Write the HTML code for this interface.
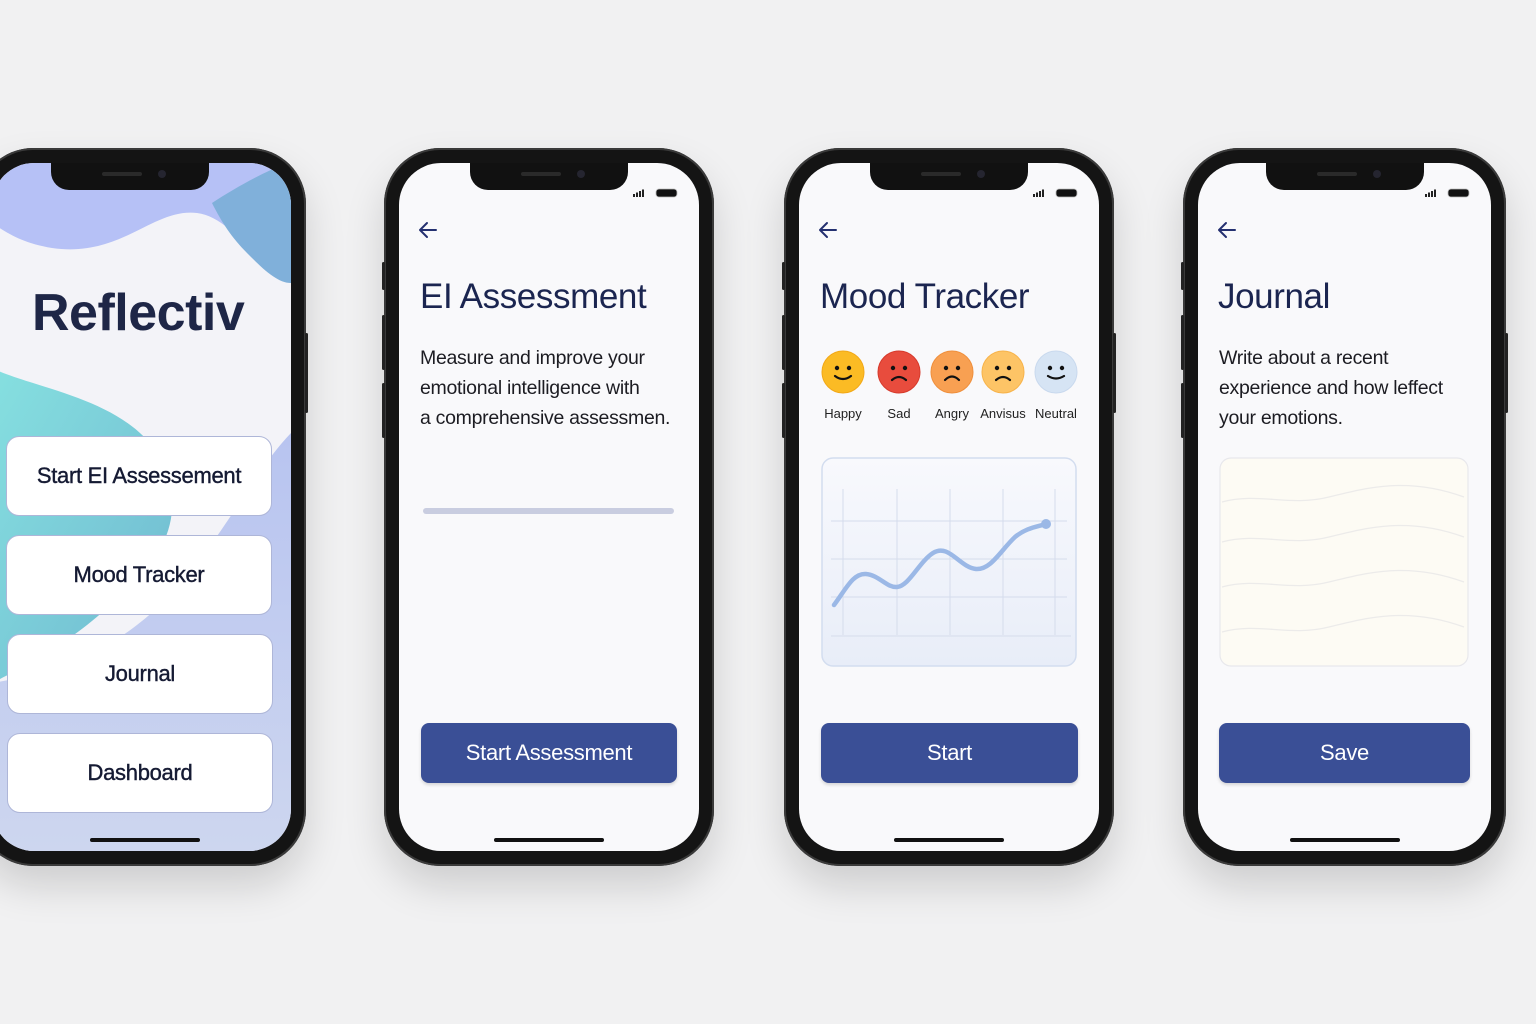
<!DOCTYPE html>
<html><head><meta charset="utf-8"><style>
*{margin:0;padding:0;box-sizing:border-box}
body{width:1536px;height:1024px;background:#f1f1f2;position:relative;overflow:hidden;font-family:"Liberation Sans",sans-serif}
.frame{position:absolute;top:148px;height:718px;background:#141414;border-radius:56px;box-shadow:0 20px 40px rgba(0,0,0,.15),inset 0 0 0 2px #3a3a3a}
.screen{position:absolute;left:15px;right:15px;top:15px;bottom:15px;border-radius:42px;background:#f9f9fb;overflow:hidden}
.notch{position:absolute;top:0;left:50%;margin-left:-79px;width:158px;height:27px;background:#111;border-radius:0 0 18px 18px}
.notch:after{content:"";position:absolute;left:51px;top:9px;width:40px;height:4px;border-radius:2px;background:#2a2a2a}
.notch:before{content:"";position:absolute;left:107px;top:7px;width:8px;height:8px;border-radius:50%;background:#252530}
.home{position:absolute;bottom:9px;left:50%;margin-left:-55px;width:110px;height:4px;border-radius:2px;background:#111}
.status{position:absolute;top:25px;right:20px;width:46px;height:10px}
.abs{position:absolute}
.title{position:absolute;left:21px;top:114px;font-size:35px;color:#1b2550;letter-spacing:-.4px}
.body{position:absolute;left:21px;top:180px;font-size:19.5px;line-height:30px;color:#1c1c22;letter-spacing:-.3px}
.back{position:absolute;left:18px;top:57px}
.btn{position:absolute;left:21px;right:21px;top:560px;height:60px;border-radius:8px;background:#3a4f96;color:#fff;font-size:22px;text-align:center;line-height:60px;box-shadow:0 2px 3px rgba(0,0,0,.15);letter-spacing:-.3px}
.mb{position:absolute;width:266px;height:80px;background:#fff;border:1.5px solid #aeb6d8;border-radius:13px;text-align:center;line-height:78px;font-size:22px;color:#151a33;letter-spacing:-.3px;-webkit-text-stroke:.4px #151a33}
.lab{position:absolute;top:243px;font-size:13px;color:#222;width:60px;text-align:center}
.side{position:absolute;width:3px;background:#222;border-radius:2px}
</style></head><body>

<!-- Phone 1 -->
<div class="frame" style="left:-23px;width:329px">
 <div class="side" style="right:-2px;top:185px;height:80px"></div>
 <div class="screen" style="background:#f3f3f8">
  <svg class="abs" style="left:0;top:0" width="299" height="688" viewBox="0 0 299 688">
   <defs><linearGradient id="tg" x1="0" y1="0" x2="1" y2="1"><stop offset="0" stop-color="#86e0e0"/><stop offset="1" stop-color="#6fb8d0"/></linearGradient>
   <linearGradient id="bg2" x1="0" y1="0" x2="0" y2="1"><stop offset="0" stop-color="#b8c4f0"/><stop offset="1" stop-color="#cdd6ef"/></linearGradient></defs>
   <path d="M0 0H299V120C270 115 245 55 205 50C160 45 130 95 60 85C30 80 15 70 0 60Z" fill="#b6c1f6"/>
   <path d="M220 40C250 20 290 0 299 0V120C285 120 270 105 255 90C240 75 230 60 220 40Z" fill="#80b0da"/>
   <path d="M0 205C40 225 130 235 165 290C200 350 170 400 120 440C80 480 20 510 0 520Z" fill="url(#tg)"/>
   <path d="M299 270C260 310 230 380 170 440C120 490 60 510 0 520V688H299Z" fill="url(#bg2)"/>
  </svg>
  <div class="abs" style="left:40px;top:120px;font-size:52px;font-weight:bold;color:#1e2647;letter-spacing:-.5px">Reflectiv</div>
  <div class="mb" style="top:273px;left:14px">Start EI Assessement</div>
  <div class="mb" style="top:372px;left:14px">Mood Tracker</div>
  <div class="mb" style="top:471px;left:15px">Journal</div>
  <div class="mb" style="top:570px;left:15px">Dashboard</div>
  <div class="notch" style="margin-left:-91px"></div>
  <div class="home" style="margin-left:-52px"></div>
 </div>
</div>

<!-- Phone 2 -->
<div class="frame" style="left:384px;width:330px">
 <div class="side" style="left:-2px;top:114px;height:28px"></div>
 <div class="side" style="left:-2px;top:167px;height:55px"></div>
 <div class="side" style="left:-2px;top:235px;height:55px"></div>
 <div class="screen">
  <div class="notch"></div>
  <svg class="status" viewBox="0 0 46 10"><rect x="0" y="6" width="2" height="3" fill="#222"/><rect x="3" y="4.5" width="2" height="4.5" fill="#222"/><rect x="6" y="3" width="2" height="6" fill="#222"/><rect x="9" y="1.5" width="2" height="7.5" fill="#222"/><rect x="23" y="1" width="21" height="8" rx="3" fill="#111" stroke="#bbb" stroke-width=".8"/></svg>
  <svg class="back" width="22" height="20" viewBox="0 0 22 20"><path d="M19 10H3M10 3L3 10L10 17" fill="none" stroke="#243070" stroke-width="2" stroke-linecap="round" stroke-linejoin="round"/></svg>
  <div class="title">EI Assessment</div>
  <div class="body">Measure and improve your<br>emotional intelligence with<br>a comprehensive assessmen.</div>
  <div class="abs" style="left:24px;top:345px;width:251px;height:6px;border-radius:3px;background:#c9cde0"></div>
  <div class="btn" style="left:22px;right:22px">Start Assessment</div>
  <div class="home"></div>
 </div>
</div>

<!-- Phone 3 -->
<div class="frame" style="left:784px;width:330px">
 <div class="side" style="left:-2px;top:114px;height:28px"></div>
 <div class="side" style="left:-2px;top:167px;height:55px"></div>
 <div class="side" style="left:-2px;top:235px;height:55px"></div>
 <div class="side" style="right:-2px;top:185px;height:80px"></div>
 <div class="screen">
  <div class="notch"></div>
  <svg class="status" viewBox="0 0 46 10"><rect x="0" y="6" width="2" height="3" fill="#222"/><rect x="3" y="4.5" width="2" height="4.5" fill="#222"/><rect x="6" y="3" width="2" height="6" fill="#222"/><rect x="9" y="1.5" width="2" height="7.5" fill="#222"/><rect x="23" y="1" width="21" height="8" rx="3" fill="#111" stroke="#bbb" stroke-width=".8"/></svg>
  <svg class="back" width="22" height="20" viewBox="0 0 22 20"><path d="M19 10H3M10 3L3 10L10 17" fill="none" stroke="#243070" stroke-width="2" stroke-linecap="round" stroke-linejoin="round"/></svg>
  <div class="title">Mood Tracker</div>
  <svg class="abs" style="left:21px;top:186px" width="260" height="46" viewBox="0 0 260 46">
   <g stroke="#111" stroke-width="2.2" fill="none" stroke-linecap="round">
    <circle cx="23" cy="23" r="21" fill="#fbbb24" stroke="#f2a817" stroke-width="1"/><circle cx="17" cy="19" r="2.2" fill="#111" stroke="none"/><circle cx="29" cy="19" r="2.2" fill="#111" stroke="none"/><path d="M15 27Q23 33 31 27"/>
    <circle cx="79" cy="23" r="21" fill="#e84c3d" stroke="#d63a2c" stroke-width="1"/><circle cx="73" cy="19" r="2.2" fill="#111" stroke="none"/><circle cx="85" cy="19" r="2.2" fill="#111" stroke="none"/><path d="M72 31Q79 25 86 31"/>
    <circle cx="132" cy="23" r="21" fill="#f8a052" stroke="#ef8f3c" stroke-width="1"/><circle cx="126" cy="19" r="2.2" fill="#111" stroke="none"/><circle cx="138" cy="19" r="2.2" fill="#111" stroke="none"/><path d="M125 31Q132 24 139 31"/>
    <circle cx="183" cy="23" r="21" fill="#fdc466" stroke="#f7b34a" stroke-width="1"/><circle cx="177" cy="19" r="2.2" fill="#111" stroke="none"/><circle cx="189" cy="19" r="2.2" fill="#111" stroke="none"/><path d="M176 31Q183 25 190 31"/>
    <circle cx="236" cy="23" r="21" fill="#d6e4f4" stroke="#c9d9ee" stroke-width="1"/><circle cx="230" cy="19" r="2.2" fill="#111" stroke="none"/><circle cx="242" cy="19" r="2.2" fill="#111" stroke="none"/><path d="M228 27Q236 32 244 27"/>
   </g></svg>
  <div class="lab" style="left:14px">Happy</div>
  <div class="lab" style="left:70px">Sad</div>
  <div class="lab" style="left:123px">Angry</div>
  <div class="lab" style="left:174px">Anvisus</div>
  <div class="lab" style="left:227px">Neutral</div>
  <svg class="abs" style="left:22px;top:294px" width="256" height="210" viewBox="0 0 256 210">
   <defs><linearGradient id="cg" x1="0" y1="0" x2="0" y2="1"><stop offset="0" stop-color="#f8f9fd"/><stop offset="1" stop-color="#e8edf8"/></linearGradient></defs>
   <rect x="1" y="1" width="254" height="208" rx="11" fill="url(#cg)" stroke="#d3ddef" stroke-width="1.5"/>
   <g stroke="#d5dcec" stroke-width="1"><path d="M22 32V178M76 32V178M129 32V178M182 32V178M234 32V178M10 64H246M10 102H246M10 140H246M10 179H250"/></g>
   <path d="M13 148C25 132 32 116 45 117C58 118 66 131 76 130C88 129 98 105 112 96C128 86 138 110 155 112C170 113 180 93 194 80C205 71 215 70 225 67" fill="none" stroke="#9bb8e6" stroke-width="4.5" stroke-linecap="round"/>
   <circle cx="225" cy="67" r="5" fill="#9bb8e6"/>
  </svg>
  <div class="btn" style="left:22px">Start</div>
  <div class="home"></div>
 </div>
</div>

<!-- Phone 4 -->
<div class="frame" style="left:1183px;width:323px">
 <div class="side" style="left:-2px;top:114px;height:28px"></div>
 <div class="side" style="left:-2px;top:167px;height:55px"></div>
 <div class="side" style="left:-2px;top:235px;height:55px"></div>
 <div class="side" style="right:-2px;top:185px;height:80px"></div>
 <div class="screen">
  <div class="notch"></div>
  <svg class="status" viewBox="0 0 46 10"><rect x="0" y="6" width="2" height="3" fill="#222"/><rect x="3" y="4.5" width="2" height="4.5" fill="#222"/><rect x="6" y="3" width="2" height="6" fill="#222"/><rect x="9" y="1.5" width="2" height="7.5" fill="#222"/><rect x="23" y="1" width="21" height="8" rx="3" fill="#111" stroke="#bbb" stroke-width=".8"/></svg>
  <svg class="back" width="22" height="20" viewBox="0 0 22 20"><path d="M19 10H3M10 3L3 10L10 17" fill="none" stroke="#243070" stroke-width="2" stroke-linecap="round" stroke-linejoin="round"/></svg>
  <div class="title" style="left:20px">Journal</div>
  <div class="body" style="left:21px">Write about a recent<br>experience and how leffect<br>your emotions.</div>
  <svg class="abs" style="left:21px;top:294px" width="250" height="210" viewBox="0 0 250 210">
   <rect x="1" y="1" width="248" height="208" rx="11" fill="#fdfbf4" stroke="#e8e8ec" stroke-width="1.2"/>
   <g fill="none" stroke="#ecebea" stroke-width="1.3"><path d="M3 45C40 35 70 50 110 40C150 30 190 20 245 40"/><path d="M3 85C40 75 70 90 110 80C150 70 190 60 245 80"/><path d="M3 130C40 120 70 135 110 125C150 115 190 105 245 125"/><path d="M3 175C40 165 70 180 110 170C150 160 190 150 245 170"/></g>
  </svg>
  <div class="btn" style="left:21px;right:21px">Save</div>
  <div class="home"></div>
 </div>
</div>

</body></html>
